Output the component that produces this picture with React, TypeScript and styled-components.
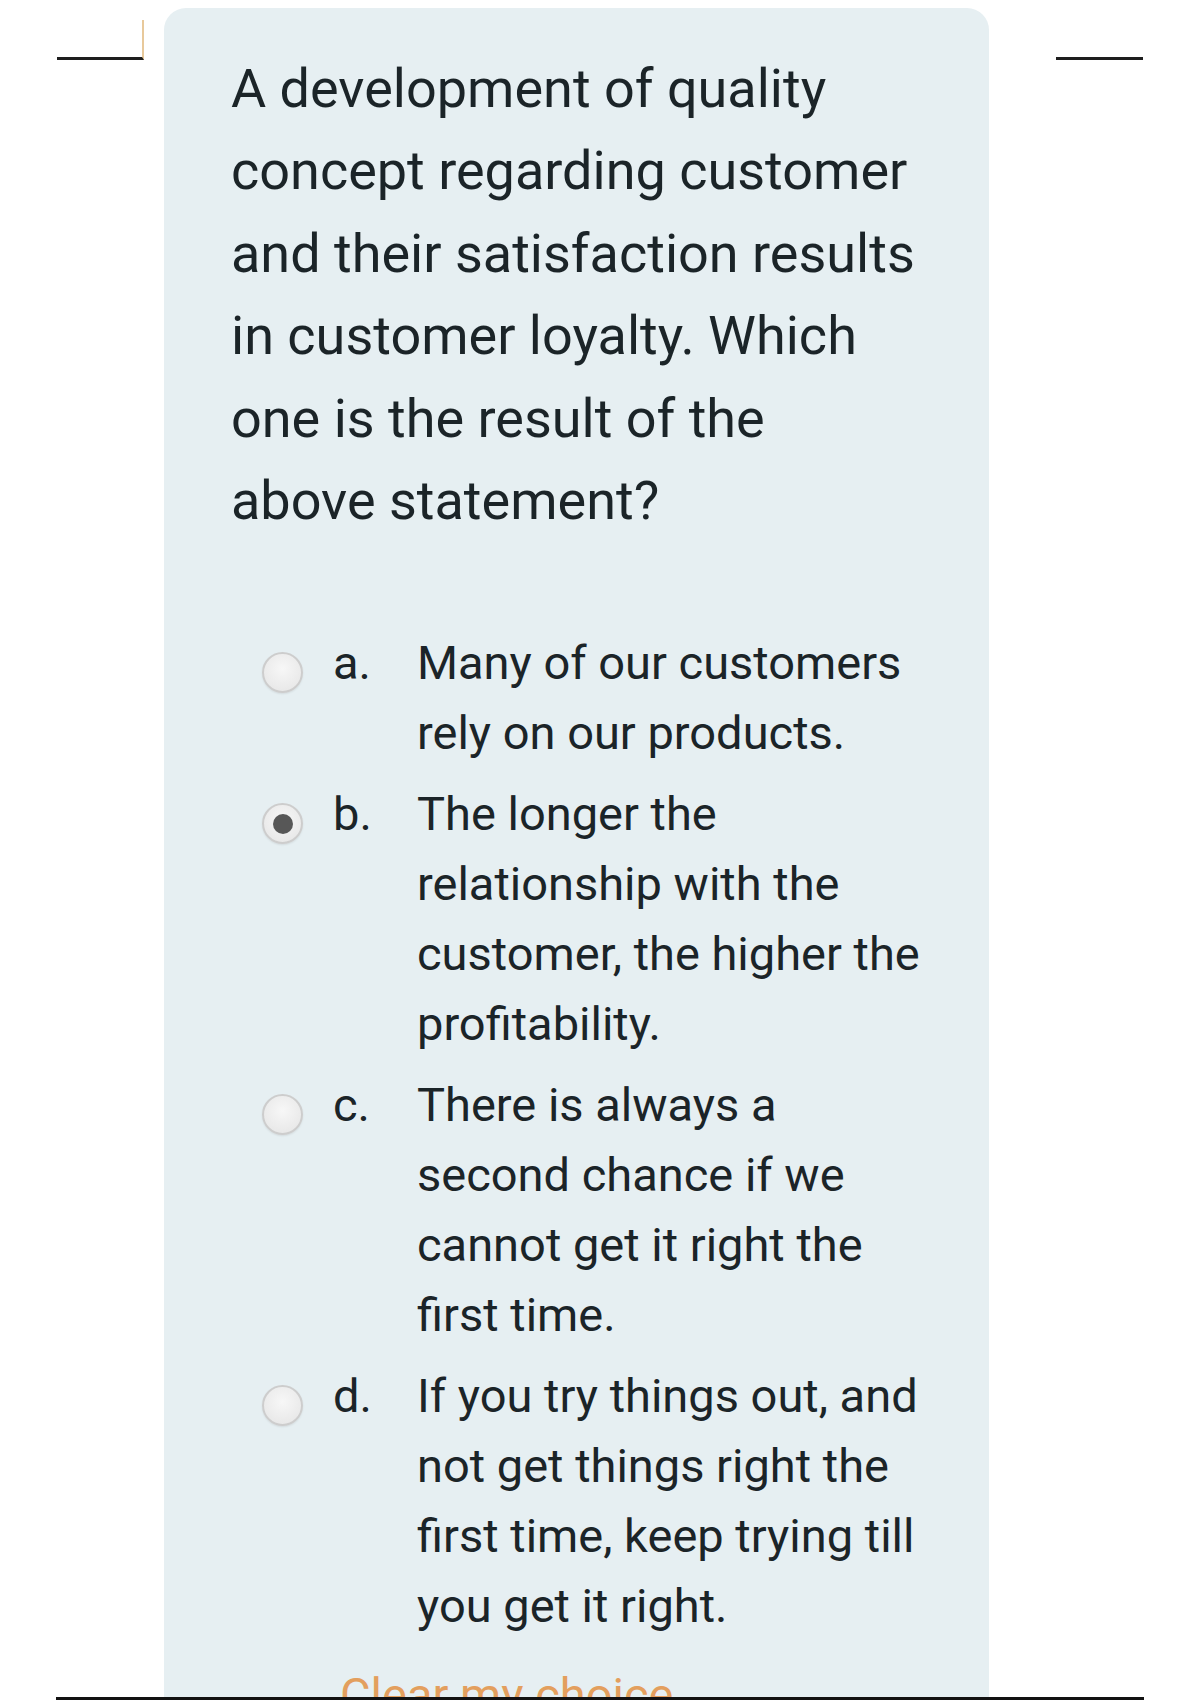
import styled, { createGlobalStyle } from "styled-components";

const GlobalStyle = createGlobalStyle`
  html, body {
    margin: 0;
    padding: 0;
    background: #fff;
  }
  body {
    font-family: Roboto, "Liberation Sans", Arial, sans-serif;
    color: #1b2428;
  }
`;

const Page = styled.div`
  width: 1200px;
  height: 1700px;
  box-sizing: border-box;
  padding-top: 8px;
  overflow: hidden;
  display: flex;
  flex-direction: column;
`;

const Stage = styled.div`
  display: grid;
  grid-template-columns: 164px 825px 1fr;
  height: 1689px;
`;

const Gutter = styled.div<{ $side: "left" | "right" }>`
  padding-top: 12px;
  padding-left: ${p => (p.$side === "left" ? "57px" : "67px")};
`;

const Dash = styled.div<{ $tick?: boolean }>`
  width: 87px;
  height: 40px;
  box-sizing: border-box;
  border-bottom: 3px solid #1e1e1e;
  border-right: ${p => (p.$tick ? "2px solid rgba(222, 178, 112, 0.7)" : "none")};
`;

const Panel = styled.section`
  background: #e6eff2;
  border-radius: 22px 22px 0 0;
  padding: 40px 40px 0 67px;
  overflow: hidden;
  box-sizing: border-box;
`;

const Question = styled.p`
  margin: 0 0 86px;
  width: 688px;
  font-size: 54px;
  line-height: 82.4px;
`;

const Options = styled.div`
  display: flex;
  flex-direction: column;
  gap: 11px;
  margin-left: 31px;
`;

const Option = styled.label`
  display: flex;
  align-items: flex-start;
  font-size: 47px;
  line-height: 70px;
`;

const Radio = styled.span<{ $checked?: boolean }>`
  flex: none;
  width: 41px;
  height: 41px;
  margin: 24px 30px 0 0;
  box-sizing: border-box;
  border-radius: 50%;
  border: 2px solid #cdcdcd;
  background: radial-gradient(circle at 50% 40%, #f7f7f7 0%, #e4e4e4 100%);
  box-shadow: 0 1px 2px rgba(0, 0, 0, 0.08);
  display: flex;
  align-items: center;
  justify-content: center;

  &::after {
    content: "";
    display: ${p => (p.$checked ? "block" : "none")};
    width: 20px;
    height: 20px;
    border-radius: 50%;
    background: #575757;
  }
`;

const Letter = styled.span`
  flex: none;
  width: 84px;
`;

const AnswerText = styled.span`
  width: 515px;
`;

const ClearLink = styled.a`
  display: block;
  margin: 19px 0 0 109px;
  font-size: 47px;
  line-height: 70px;
  color: #e39f5e;
  text-decoration: none;
`;

const Rule = styled.div`
  margin-left: 56px;
  width: 1088px;
  height: 3px;
  background: #121212;
`;

const answers = [
  { letter: "a.", text: "Many of our customers rely on our products." },
  { letter: "b.", text: "The longer the relationship with the customer, the higher the profitability.", checked: true },
  { letter: "c.", text: "There is always a second chance if we cannot get it right the first time." },
  { letter: "d.", text: "If you try things out, and not get things right the first time, keep trying till you get it right." },
];

export default function App() {
  return (
    <>
      <GlobalStyle />
      <Page>
        <Stage>
          <Gutter $side="left">
            <Dash $tick />
          </Gutter>
          <Panel>
            <Question>
              A development of quality concept regarding customer and their satisfaction results in customer loyalty. Which one is the result of the above statement?
            </Question>
            <Options>
              {answers.map(a => (
                <Option key={a.letter}>
                  <Radio $checked={a.checked} />
                  <Letter>{a.letter}</Letter>
                  <AnswerText>{a.text}</AnswerText>
                </Option>
              ))}
            </Options>
            <ClearLink href="#">Clear my choice</ClearLink>
          </Panel>
          <Gutter $side="right">
            <Dash />
          </Gutter>
        </Stage>
        <Rule />
      </Page>
    </>
  );
}
